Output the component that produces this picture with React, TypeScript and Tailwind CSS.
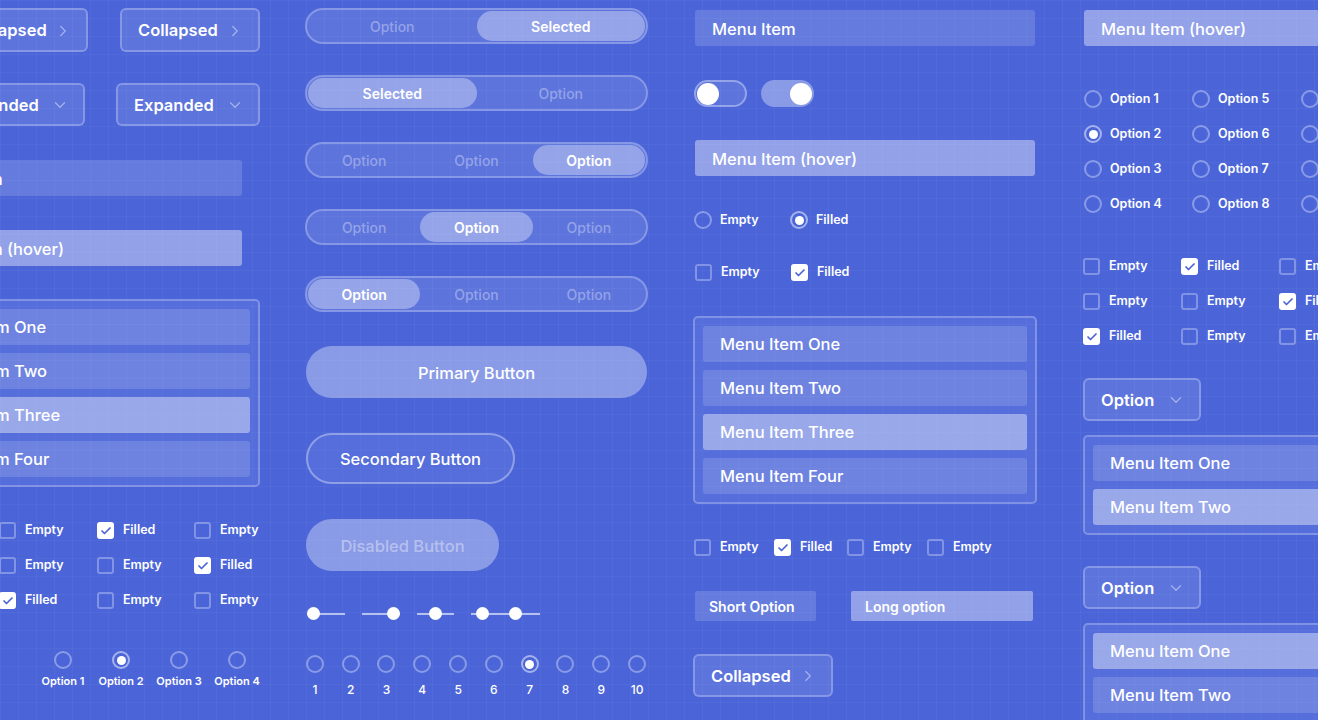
import { ChevronRight, ChevronDown, Check } from "lucide-react";

function DropBtn({ label, cls, down }: { label: string; cls: string; down?: boolean }) {
  return (
    <div
      className={`flex shrink-0 items-center justify-between rounded-[6px] border-2 border-white/25 bg-white/10 pl-[16px] pr-[14px] pt-[1px] text-[16.5px] font-semibold text-white ${cls}`}
    >
      <span>{label}</span>
      {down ? (
        <ChevronDown size={18} strokeWidth={1.6} className="text-white/45" />
      ) : (
        <ChevronRight size={18} strokeWidth={1.6} className="text-white/45" />
      )}
    </div>
  );
}

function Bar({ label, hover, cls }: { label: string; hover?: boolean; cls: string }) {
  return (
    <div
      className={`flex h-[36px] w-[340px] shrink-0 items-center rounded-[3px] pl-[17px] pt-[2px] text-[16.5px] font-medium text-white ${
        hover ? "bg-white/40" : "bg-white/15"
      } ${cls}`}
    >
      {label}
    </div>
  );
}

function ListBox({ items, sel, cls }: { items: string[]; sel: number; cls: string }) {
  return (
    <div className={`flex shrink-0 flex-col gap-[8px] rounded-[5px] border-2 border-white/25 bg-white/[0.06] p-[8px] ${cls}`}>
      {items.map((it, i) => (
        <div
          key={i}
          className={`flex h-[36px] items-center rounded-[3px] pl-[17px] pt-[1px] text-[16.5px] font-medium text-white ${
            i === sel ? "bg-white/40" : "bg-white/15"
          }`}
        >
          {it}
        </div>
      ))}
    </div>
  );
}

function Box({ on }: { on?: boolean }) {
  return on ? (
    <div className="flex h-[17px] w-[17px] shrink-0 items-center justify-center rounded-[3px] bg-white">
      <Check size={12} strokeWidth={3.5} className="text-[#4b64d8]" />
    </div>
  ) : (
    <div className="h-[17px] w-[17px] shrink-0 rounded-[3px] border-2 border-white/30" />
  );
}

function Radio({ on }: { on?: boolean }) {
  return (
    <div
      className={`flex h-[18px] w-[18px] shrink-0 items-center justify-center rounded-full border-2 ${
        on ? "border-white/50" : "border-white/35"
      }`}
    >
      {on && <div className="h-[9px] w-[9px] rounded-full bg-white" />}
    </div>
  );
}

function BoxL({ on, label, cls }: { on?: boolean; label: string; cls?: string }) {
  return (
    <div className={`flex h-[17px] items-center gap-[9px] ${cls ?? ""}`}>
      <Box on={on} />
      <span className="text-[12.5px] font-semibold leading-none text-white">{label}</span>
    </div>
  );
}

function RadioL({ on, label, cls }: { on?: boolean; label: string; cls?: string }) {
  return (
    <div className={`flex h-[18px] items-center gap-[8px] ${cls ?? ""}`}>
      <Radio on={on} />
      <span className="text-[12.5px] font-semibold leading-none text-white">{label}</span>
    </div>
  );
}

function Seg({ opts, sel, cls }: { opts: string[]; sel: number; cls: string }) {
  return (
    <div className={`flex h-[36px] w-[343px] rounded-full border-2 border-white/25 bg-white/10 p-[1px] ${cls}`}>
      {opts.map((o, i) => (
        <div
          key={i}
          className={
            i === sel
              ? "flex flex-1 items-center justify-center rounded-full bg-white/35 pt-[1px] text-[14px] font-semibold text-white"
              : "flex flex-1 items-center justify-center pt-[1px] text-[14px] font-medium text-white/35"
          }
        >
          {o}
        </div>
      ))}
    </div>
  );
}

const cb1: [boolean, boolean, boolean][] = [
  [false, true, false],
  [false, false, true],
  [true, false, false],
];

export default function App() {
  return (
    <div className="relative h-[720px] w-[1318px] overflow-hidden bg-[#4b65d9] font-[Inter,'Noto_Sans',sans-serif] [background-image:linear-gradient(rgba(255,255,255,0.035)_1px,transparent_1px),linear-gradient(90deg,rgba(255,255,255,0.035)_1px,transparent_1px)] [background-size:18px_18px]">
      <div className="flex items-start">
        {/* Column 1 */}
        <div className="ml-[-101px] flex w-[361px] shrink-0 flex-col items-end">
          <div className="mt-[8px] flex gap-[32px]">
            <DropBtn label="Collapsed" cls="h-[44px] w-[139px]" />
            <DropBtn label="Collapsed" cls="h-[44px] w-[140px]" />
          </div>
          <div className="mt-[31px] flex gap-[31px]">
            <DropBtn label="Expanded" down cls="h-[43px] w-[144px]" />
            <DropBtn label="Expanded" down cls="h-[43px] w-[144px]" />
          </div>
          <Bar label="Menu Item" cls="mt-[34px] mr-[18px] h-[35px]" />
          <Bar label="Menu Item (hover)" hover cls="mt-[34px] mr-[18px] h-[35px]" />
          <ListBox
            items={["Menu Item One", "Menu Item Two", "Menu Item Three", "Menu Item Four"]}
            sel={2}
            cls="mt-[33px] w-[361px]"
          />
          <div className="ml-[100px] mt-[35px] grid grid-cols-[98px_97px_auto] gap-y-[18px] self-start">
            {cb1.flat().map((on, i) => (
              <BoxL key={i} on={on} label={on ? "Filled" : "Empty"} />
            ))}
          </div>
          <div className="ml-[135px] mt-[42px] flex self-start">
            {["Option 1", "Option 2", "Option 3", "Option 4"].map((o, i) => (
              <div key={i} className="flex w-[58px] shrink-0 flex-col items-center">
                <Radio on={i === 1} />
                <span className="mt-[5px] text-[11px] font-semibold leading-[14px] text-white">{o}</span>
              </div>
            ))}
          </div>
        </div>

        {/* Column 2 */}
        <div className="ml-[45px] flex w-[343px] shrink-0 flex-col">
          <Seg opts={["Option", "Selected"]} sel={1} cls="mt-[8px]" />
          <Seg opts={["Selected", "Option"]} sel={0} cls="mt-[31px]" />
          <Seg opts={["Option", "Option", "Option"]} sel={2} cls="mt-[31px]" />
          <Seg opts={["Option", "Option", "Option"]} sel={1} cls="mt-[31px]" />
          <Seg opts={["Option", "Option", "Option"]} sel={0} cls="mt-[31px]" />
          <div className="ml-[1px] mt-[34px] flex h-[52px] w-[341px] items-center justify-center rounded-full bg-white/35 pt-[2px] text-[16.5px] font-medium text-white">
            Primary Button
          </div>
          <div className="ml-[1px] mt-[35px] flex h-[51px] w-[209px] items-center justify-center rounded-full border-2 border-white/35 bg-white/[0.06] pt-[2px] text-[16.5px] font-medium text-white">
            Secondary Button
          </div>
          <div className="ml-[1px] mt-[35px] flex h-[52px] w-[193px] items-center justify-center rounded-full bg-white/35 pt-[2px] text-[16.5px] font-medium text-white/40">
            Disabled Button
          </div>
          <div className="ml-[2px] mt-[36px] flex h-[13px] items-center">
            <div className="relative h-[13px] w-[38px]">
              <div className="absolute left-0 right-0 top-[6px] h-[1.5px] bg-white/60" />
              <div className="absolute left-0 top-0 h-[13px] w-[13px] rounded-full bg-white" />
            </div>
            <div className="relative ml-[17px] h-[13px] w-[38px]">
              <div className="absolute left-0 right-0 top-[6px] h-[1.5px] bg-white/60" />
              <div className="absolute right-0 top-0 h-[13px] w-[13px] rounded-full bg-white" />
            </div>
            <div className="relative ml-[17px] h-[13px] w-[37px]">
              <div className="absolute left-0 right-0 top-[6px] h-[1.5px] bg-white/60" />
              <div className="absolute left-[12px] top-0 h-[13px] w-[13px] rounded-full bg-white" />
            </div>
            <div className="relative ml-[17px] h-[13px] w-[69px]">
              <div className="absolute left-0 right-0 top-[6px] h-[1.5px] bg-white/60" />
              <div className="absolute left-[5px] top-0 h-[13px] w-[13px] rounded-full bg-white" />
              <div className="absolute left-[38px] top-0 h-[13px] w-[13px] rounded-full bg-white" />
            </div>
          </div>
          <div className="ml-[-8px] mt-[35px] flex">
            {[1, 2, 3, 4, 5, 6, 7, 8, 9, 10].map((n) => (
              <div key={n} className="flex w-[35.8px] shrink-0 flex-col items-center">
                <Radio on={n === 7} />
                <span className="mt-[10px] text-[12px] font-medium leading-[14px] text-white">{n}</span>
              </div>
            ))}
          </div>
        </div>

        {/* Column 3 */}
        <div className="ml-[45px] flex w-[344px] shrink-0 flex-col">
          <Bar label="Menu Item" cls="ml-[2px] mt-[10px]" />
          <div className="ml-[1px] mt-[34px] flex gap-[14px]">
            <div className="flex h-[27px] w-[53px] items-center rounded-full border-2 border-white/35 bg-white/10 pl-[1px]">
              <div className="h-[22px] w-[22px] rounded-full bg-white" />
            </div>
            <div className="flex h-[27px] w-[53px] items-center justify-end rounded-full bg-white/35 pr-[2px]">
              <div className="h-[22px] w-[22px] rounded-full bg-white" />
            </div>
          </div>
          <Bar label="Menu Item (hover)" hover cls="ml-[2px] mt-[33px]" />
          <div className="ml-[1px] mt-[35px] flex">
            <RadioL label="Empty" cls="w-[96px]" />
            <RadioL on label="Filled" />
          </div>
          <div className="ml-[2px] mt-[35px] flex">
            <BoxL label="Empty" cls="w-[96px]" />
            <BoxL on label="Filled" />
          </div>
          <ListBox
            items={["Menu Item One", "Menu Item Two", "Menu Item Three", "Menu Item Four"]}
            sel={2}
            cls="mt-[35px] w-[344px]"
          />
          <div className="ml-[1px] mt-[35px] flex">
            <BoxL label="Empty" cls="w-[80px]" />
            <BoxL on label="Filled" cls="w-[73px]" />
            <BoxL label="Empty" cls="w-[80px]" />
            <BoxL label="Empty" />
          </div>
          <div className="ml-[2px] mt-[35px] flex gap-[35px]">
            <div className="flex h-[30px] w-[121px] items-center rounded-[2px] bg-white/15 pl-[14px] pt-[1px] text-[14px] font-semibold text-white">
              Short Option
            </div>
            <div className="flex h-[30px] w-[182px] items-center rounded-[2px] bg-white/40 pl-[14px] pt-[1px] text-[14px] font-semibold text-white">
              Long option
            </div>
          </div>
          <DropBtn label="Collapsed" cls="mt-[33px] h-[43px] w-[140px]" />
        </div>

        {/* Column 4 */}
        <div className="ml-[46px] flex w-[360px] shrink-0 flex-col">
          <Bar label="Menu Item (hover)" hover cls="ml-[1px] mt-[10px]" />
          <div className="ml-[1px] mt-[44px] grid grid-flow-col grid-cols-[108px_109px_108px] grid-rows-4 gap-y-[17px]">
            {[1, 2, 3, 4, 5, 6, 7, 8, 9, 10, 11, 12].map((n) => (
              <RadioL key={n} on={n === 2} label={`Option ${n}`} />
            ))}
          </div>
          <div className="mt-[45px] grid grid-cols-[98px_98px_98px] gap-y-[18px]">
            {cb1.flat().map((on, i) => (
              <BoxL key={i} on={on} label={on ? "Filled" : "Empty"} />
            ))}
          </div>
          <DropBtn label="Option" down cls="mt-[33px] h-[43px] w-[118px]" />
          <ListBox items={["Menu Item One", "Menu Item Two"]} sel={1} cls="mt-[14px] w-[344px]" />
          <DropBtn label="Option" down cls="mt-[31px] h-[43px] w-[118px]" />
          <ListBox items={["Menu Item One", "Menu Item Two", "Menu Item Three"]} sel={0} cls="mt-[14px] w-[344px]" />
        </div>
      </div>
    </div>
  );
}
